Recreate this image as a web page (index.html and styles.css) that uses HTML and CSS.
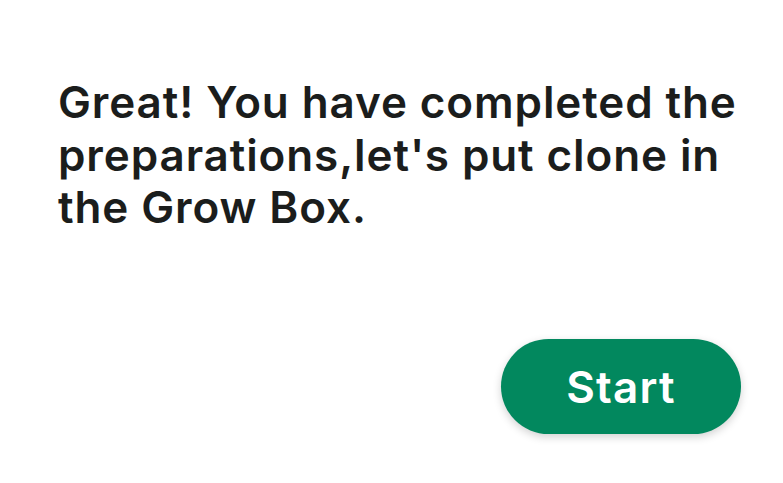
FILE: index.html
```html
<!DOCTYPE html>
<html>
<head>
<meta charset="utf-8">
<link rel="stylesheet" href="styles.css">
</head>
<body>
<main class="screen">
  <p class="message">Great! You have completed the preparations,let's put clone in the Grow Box.</p>
  <div class="actions">
    <button class="start-btn">Start</button>
  </div>
</main>
</body>
</html>
```
FILE: styles.css
```css
html, body {
  margin: 0;
  padding: 0;
  background: #ffffff;
}
.screen {
  width: 783px;
  height: 483px;
  box-sizing: border-box;
  padding: 76px 42px 0 58px;
  display: flex;
  flex-direction: column;
  font-family: Inter, "Noto Sans", sans-serif;
}
.message {
  margin: 0;
  width: 700px;
  font-size: 44px;
  font-weight: 580;
  line-height: 52.5px;
  color: #1b1d1c;
  letter-spacing: 0.9px;
}
.actions {
  display: flex;
  justify-content: flex-end;
  margin-top: 105.5px;
}
.start-btn {
  width: 240px;
  height: 95px;
  border: none;
  border-radius: 48px;
  background: #02885e;
  color: #ffffff;
  font-family: Inter, "Noto Sans", sans-serif;
  font-size: 44px;
  font-weight: 580;
  letter-spacing: 1.2px;
  box-shadow: 0 3px 8px rgba(0,0,0,0.18);
  padding: 0;
}
```
